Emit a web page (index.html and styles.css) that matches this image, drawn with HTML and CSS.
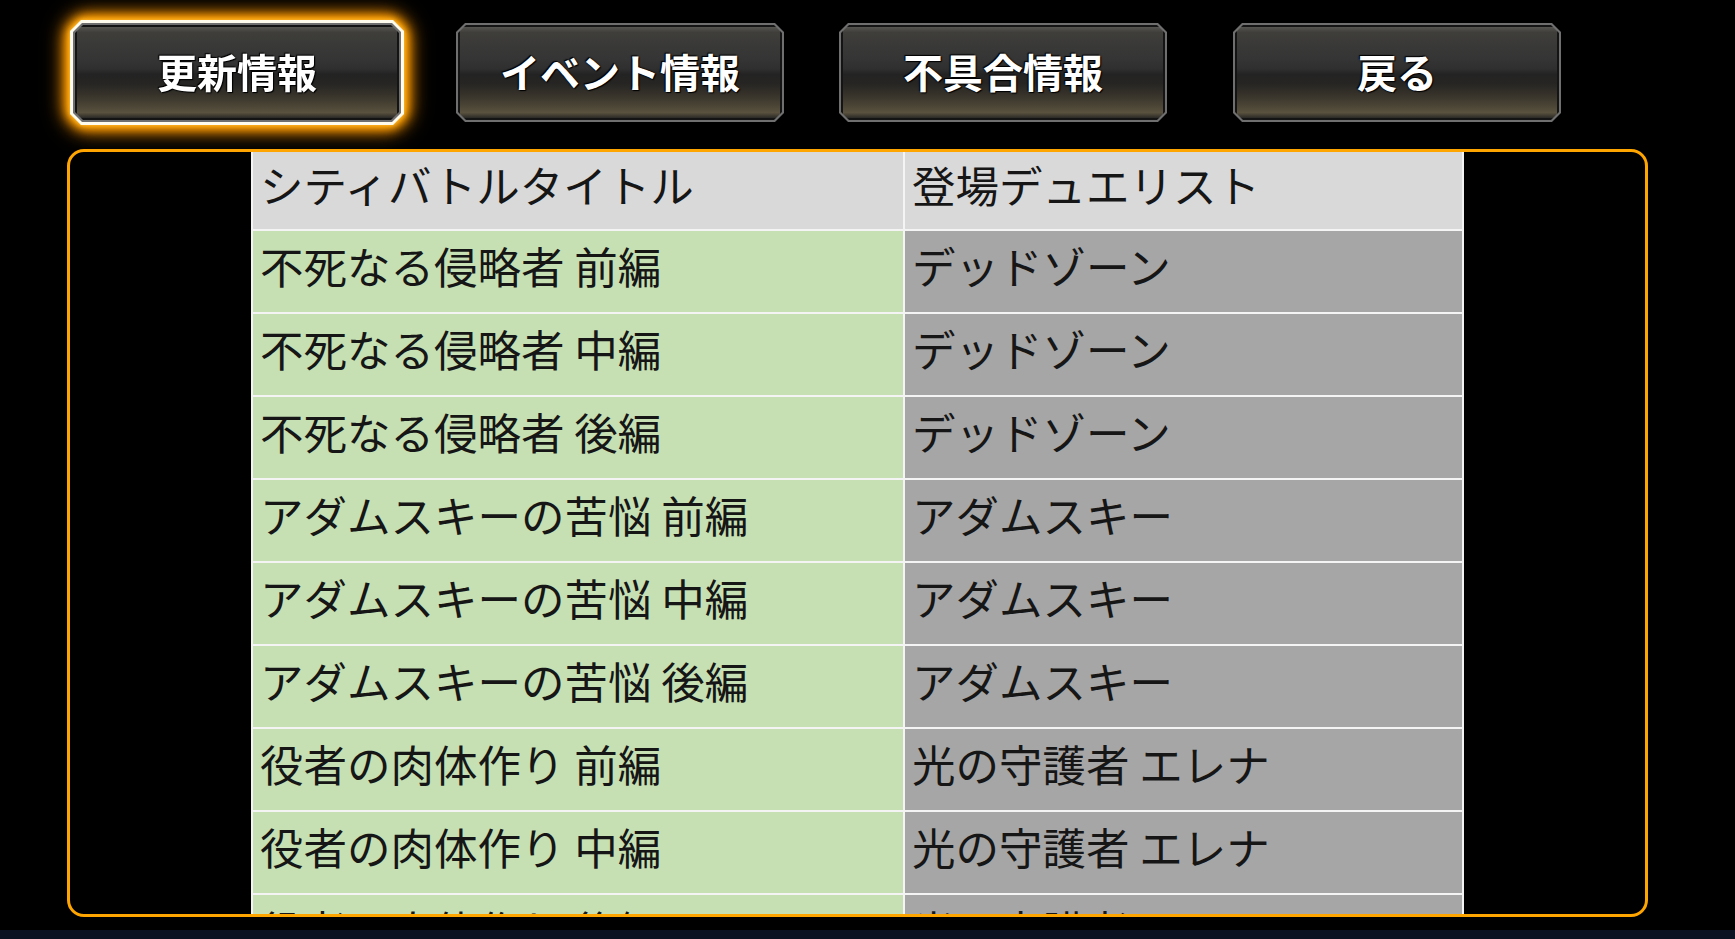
FILE: index.html
```html
<!DOCTYPE html>
<html lang="ja">
<head>
<meta charset="utf-8">
<title>シティバトル</title>
<link rel="stylesheet" href="styles.css">
</head>
<body>
<div class="page">
  <nav class="tabs">
    <div class="tab-glow">
      <div class="tab-ring">
        <button class="tab"><span class="tab-face">更新情報</span></button>
      </div>
    </div>
    <div class="tab-glow plain">
      <div class="tab-ring">
        <button class="tab"><span class="tab-face">イベント情報</span></button>
      </div>
    </div>
    <div class="tab-glow plain">
      <div class="tab-ring">
        <button class="tab"><span class="tab-face">不具合情報</span></button>
      </div>
    </div>
    <div class="tab-glow plain last">
      <div class="tab-ring">
        <button class="tab"><span class="tab-face">戻る</span></button>
      </div>
    </div>
  </nav>

  <section class="panel">
    <table class="list">
      <thead>
        <tr><th class="c1">シティバトルタイトル</th><th class="c2">登場デュエリスト</th></tr>
      </thead>
      <tbody>
        <tr><td class="c1">不死なる侵略者 前編</td><td class="c2">デッドゾーン</td></tr>
        <tr><td class="c1">不死なる侵略者 中編</td><td class="c2">デッドゾーン</td></tr>
        <tr><td class="c1">不死なる侵略者 後編</td><td class="c2">デッドゾーン</td></tr>
        <tr><td class="c1">アダムスキーの苦悩 前編</td><td class="c2">アダムスキー</td></tr>
        <tr><td class="c1">アダムスキーの苦悩 中編</td><td class="c2">アダムスキー</td></tr>
        <tr><td class="c1">アダムスキーの苦悩 後編</td><td class="c2">アダムスキー</td></tr>
        <tr><td class="c1">役者の肉体作り 前編</td><td class="c2">光の守護者 エレナ</td></tr>
        <tr><td class="c1">役者の肉体作り 中編</td><td class="c2">光の守護者 エレナ</td></tr>
        <tr><td class="c1">役者の肉体作り 後編</td><td class="c2">光の守護者 エレナ</td></tr>
      </tbody>
    </table>
  </section>

  <div class="bottom-strip"></div>
</div>
</body>
</html>
```

FILE: styles.css
```css
* { box-sizing: border-box; }

html, body {
  margin: 0;
  padding: 0;
  background: #000;
}

body {
  width: 1735px;
  height: 939px;
  overflow: hidden;
  font-family: "Noto Sans CJK JP", "Noto Sans", sans-serif;
}

.page {
  display: flex;
  flex-direction: column;
  height: 939px;
}

/* ---------- tabs ---------- */
.tabs {
  display: flex;
  align-items: flex-start;
  padding: 20px 0 0 70px;
  gap: 49px;
  height: 149px;
}

.tab-glow {
  filter: drop-shadow(0 0 2px #ffc040) drop-shadow(0 0 4px #ffa800) drop-shadow(0 0 6px #ff9c00) drop-shadow(0 0 9px #ff9400);
}

.tab-glow.plain { filter: none; }
.tab-glow.last { margin-left: 11px; }

.tab-ring {
  width: 334px;
  height: 105px;
  padding: 3px;
  background: #fffcee;
  clip-path: polygon(11px 0, calc(100% - 11px) 0, 100% 11px, 100% calc(100% - 11px), calc(100% - 11px) 100%, 11px 100%, 0 calc(100% - 11px), 0 11px);
}

.plain .tab-ring { background: transparent; }

.tab {
  display: block;
  width: 328px;
  height: 99px;
  margin: 0;
  padding: 2px;
  border: 0;
  background: #6f6f6f;
  cursor: pointer;
  clip-path: polygon(9px 0, calc(100% - 9px) 0, 100% 9px, 100% calc(100% - 9px), calc(100% - 9px) 100%, 9px 100%, 0 calc(100% - 9px), 0 9px);
}

.tab-face {
  display: flex;
  align-items: center;
  justify-content: center;
  width: 100%;
  height: 100%;
  padding-bottom: 4px;
  border: 2px solid #141414;
  clip-path: polygon(8px 0, calc(100% - 8px) 0, 100% 8px, 100% calc(100% - 8px), calc(100% - 8px) 100%, 8px 100%, 0 calc(100% - 8px), 0 8px);
  background: linear-gradient(to bottom,
    #55544f 0%,
    #3f3e3a 6%,
    #393938 20%,
    #353535 35%,
    #2f2f2f 46%,
    #232323 52%,
    #262523 62%,
    #36322a 74%,
    #4a4435 86%,
    #5a523f 94%,
    #2a2926 100%);
  color: #fff;
  font-family: "Noto Sans CJK JP", "Noto Sans", sans-serif;
  font-weight: 700;
  font-size: 40px;
  letter-spacing: 0;
  text-shadow: 0 0 2px #000, 1px 1px 1px #000, -1px -1px 1px #000;
}

/* ---------- panel ---------- */
.panel {
  width: 1581px;
  height: 768px;
  margin-left: 67px;
  border: 3px solid #ffa500;
  border-radius: 17px;
  overflow: hidden;
  background: #000;
}

.list {
  margin: 0 auto;
  width: 1213px;
  table-layout: fixed;
  border-collapse: separate;
  border-spacing: 0;
  border-left: 2px solid #f4f4f4;
  color: #161616;
  font-family: "Noto Sans CJK JP", "Noto Sans", sans-serif;
  font-size: 43.5px;
  font-weight: 400;
}

.list th,
.list td {
  text-align: left;
  white-space: nowrap;
  overflow: hidden;
  border-right: 2px solid #f4f4f4;
  border-bottom: 2px solid #f4f4f4;
  padding: 0 0 11px 7px;
  line-height: 70px;
  font-weight: 400;
}

.list th {
  background: #d9d9d9;
  line-height: 65px;
  padding-bottom: 12px;
}

.list .c1 { width: 652px; }
.list .c2 { width: 559px; }

.list td.c1 { background: #c6e0b4; }
.list td.c2 { background: #a6a6a6; }

/* ---------- bottom strip ---------- */
.bottom-strip {
  margin-top: 13px;
  height: 9px;
  background: #0b1222;
}
```
